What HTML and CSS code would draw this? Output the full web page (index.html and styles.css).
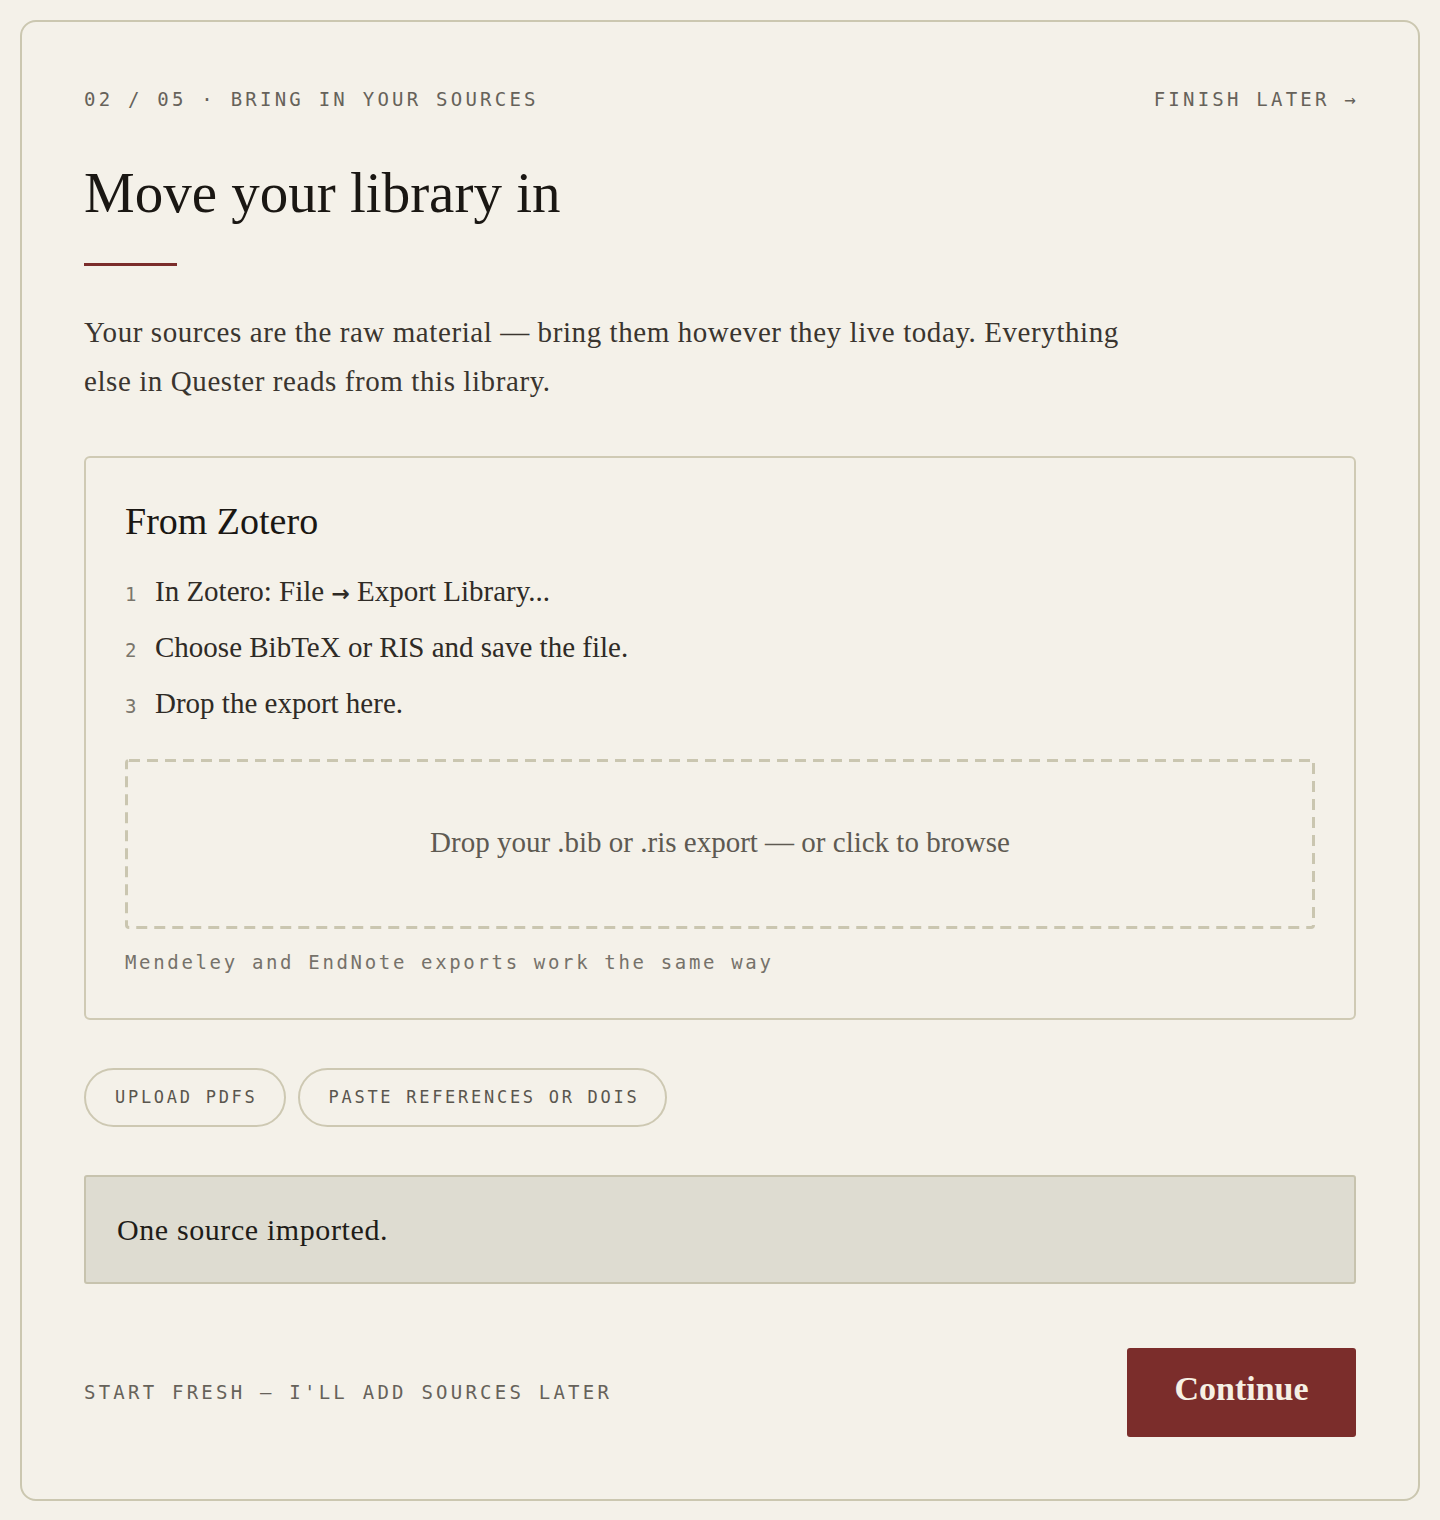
FILE: index.html
```html
<!DOCTYPE html>
<html lang="en">
<head>
<meta charset="utf-8">
<title>Quester · Bring in your sources</title>
<link rel="stylesheet" href="styles.css">
</head>
<body>
<main class="card">
  <header class="topbar">
    <span class="eyebrow">02 / 05 · Bring in your sources</span>
    <a class="finish-later" href="#">Finish later →</a>
  </header>

  <h1 class="title">Move your library in</h1>
  <div class="title-rule"></div>

  <p class="lede">Your sources are the raw material — bring them however they live today. Everything else in Quester reads from this library.</p>

  <section class="source-panel">
    <h2 class="panel-title">From Zotero</h2>
    <ol class="steps">
      <li class="step"><span class="step-num">1</span><span class="step-text">In Zotero: File <span class="step-arrow">→</span> Export Library...</span></li>
      <li class="step"><span class="step-num">2</span><span class="step-text">Choose BibTeX or RIS and save the file.</span></li>
      <li class="step"><span class="step-num">3</span><span class="step-text">Drop the export here.</span></li>
    </ol>
    <div class="dropzone">Drop your .bib or .ris export — or click to browse</div>
    <p class="panel-note">Mendeley and EndNote exports work the same way</p>
  </section>

  <div class="alt-actions">
    <button class="pill" type="button">Upload PDFs</button>
    <button class="pill" type="button">Paste references or DOIs</button>
  </div>

  <div class="status">One source imported.</div>

  <footer class="footer">
    <a class="skip" href="#">Start fresh — I'll add sources later</a>
    <button class="continue" type="button">Continue</button>
  </footer>
</main>
</body>
</html>
```
FILE: styles.css
```css
* {
  box-sizing: border-box;
}

body {
  margin: 0;
  background: #f4f1e9;
  color: #2f2b26;
  font-family: "Liberation Serif", "Times New Roman", serif;
}

.card {
  margin: 20px;
  border: 2px solid #cbc7b0;
  border-radius: 16px;
  padding: 64px 62px 62px 62px;
  background: #f4f1e9;
}

/* mono labels */
.eyebrow,
.finish-later,
.skip,
.pill,
.panel-note,
.step-num {
  font-family: "DejaVu Sans Mono", "Liberation Mono", monospace;
}

.topbar {
  display: flex;
  justify-content: space-between;
  align-items: center;
}

.eyebrow,
.finish-later,
.skip {
  font-size: 19px;
  line-height: 27px;
  letter-spacing: 0.17em;
  text-transform: uppercase;
  color: #66625a;
  text-decoration: none;
}

.finish-later {
  margin-right: -3px;
}

.title {
  margin: 48px 0 0;
  font-size: 57px;
  line-height: 64px;
  font-weight: 400;
  letter-spacing: 0;
  color: #1a1713;
}

.title-rule {
  width: 93px;
  height: 3px;
  margin-top: 38px;
  background: #7b2d2b;
}

.lede {
  margin: 42px 0 0;
  max-width: 1060px;
  font-size: 29px;
  line-height: 49px;
  letter-spacing: 0.02em;
  color: #3a352f;
}

.source-panel {
  margin-top: 50px;
  border: 2px solid #cfcab4;
  border-radius: 6px;
  padding: 40px 39px 42px;
}

.panel-title {
  margin: 0;
  font-size: 38px;
  line-height: 46px;
  font-weight: 400;
  letter-spacing: 0;
  color: #1a1713;
}

.steps {
  list-style: none;
  margin: 27px 0 0;
  padding: 0;
  display: flex;
  flex-direction: column;
  gap: 13px;
}

.step {
  display: flex;
  align-items: baseline;
  gap: 10px;
  font-size: 29px;
  line-height: 40px;
  color: #2f2b26;
}

.step-num {
  width: 20px;
  font-size: 19px;
  color: #7a766c;
}

.step-arrow {
  font-family: "DejaVu Sans", sans-serif;
  font-weight: 700;
  font-size: 22px;
  color: #2f2b26;
}

.dropzone {
  margin-top: 33px;
  border-radius: 4px;
  padding: 66px 24px 69px;
  /* dashed outline drawn as svg so dash length can be tuned */
  background-image: url("data:image/svg+xml,%3Csvg xmlns='http://www.w3.org/2000/svg'%3E%3Crect width='100%25' height='100%25' fill='none' rx='4' stroke='%23cac6b0' stroke-width='6' stroke-dasharray='11 7'/%3E%3C/svg%3E");
  text-align: center;
  font-size: 29px;
  line-height: 35px;
  color: #5e5a52;
  cursor: pointer;
}

.panel-note {
  margin: 20px 0 0;
  font-size: 19px;
  line-height: 27px;
  letter-spacing: 0.14em;
  color: #76726a;
}

.alt-actions {
  display: flex;
  gap: 12px;
  margin-top: 48px;
}

.pill {
  border: 2px solid #cdc8b2;
  border-radius: 999px;
  background: transparent;
  padding: 16px 26px 16px 29px;
  font-size: 17px;
  line-height: 23px;
  letter-spacing: 0.16em;
  text-transform: uppercase;
  color: #5a564e;
  cursor: pointer;
}

.status {
  margin-top: 48px;
  border: 2px solid #c7c3ae;
  border-radius: 3px;
  background: #dedcd1;
  padding: 35px 31px;
  font-size: 30px;
  line-height: 35px;
  letter-spacing: 0.02em;
  color: #1f1c18;
}

.footer {
  margin-top: 64px;
  display: flex;
  justify-content: space-between;
  align-items: center;
}

.continue {
  width: 229px;
  height: 89px;
  border: none;
  border-radius: 3px;
  background: #7b2d2b;
  color: #f6f0e4;
  font-family: "Liberation Serif", "Times New Roman", serif;
  font-size: 34px;
  font-weight: 700;
  padding: 0 0 8px;
  cursor: pointer;
}
```
